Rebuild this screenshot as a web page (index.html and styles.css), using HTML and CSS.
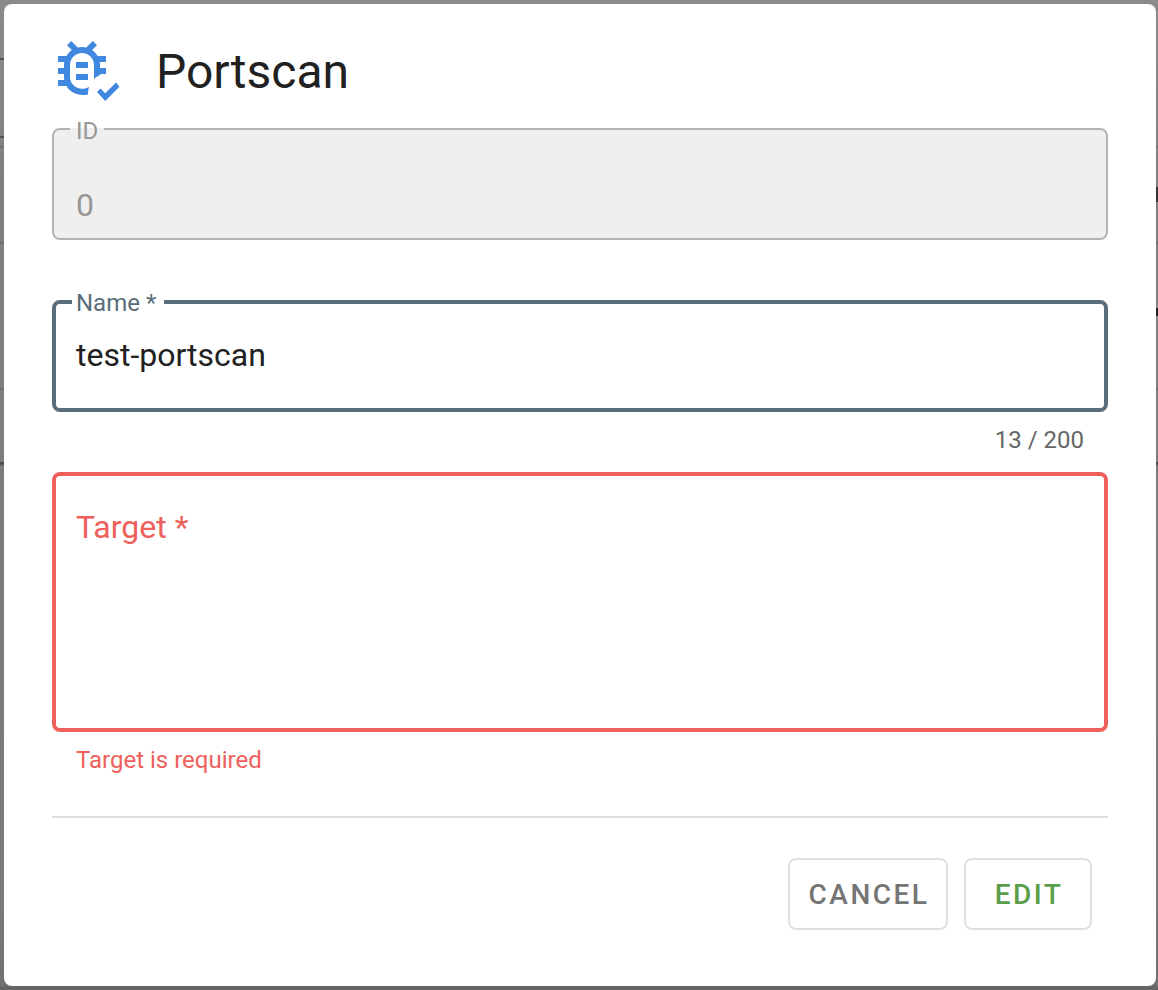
FILE: index.html
```html
<!DOCTYPE html>
<html lang="en">
<head>
<meta charset="utf-8">
<title>Portscan</title>
<link rel="stylesheet" href="styles.css">
</head>
<body>
<main class="backdrop">
  <section class="dialog" role="dialog" aria-labelledby="title">
    <header class="header">
      <svg class="bug" viewBox="0 0 24 24" aria-hidden="true">
        <path fill-rule="evenodd" d="M20 8H17.19C16.74 7.2 16.12 6.5 15.37 6L17 4.41L15.59 3L13.42 5.17C12.96 5.06 12.49 5 12 5S11.05 5.06 10.59 5.17L8.41 3L7 4.41L8.62 6C7.87 6.5 7.26 7.21 6.81 8H4V10H6.09C6.03 10.33 6 10.66 6 11V12H4V14H6V15C6 15.34 6.03 15.67 6.09 16H4V18H6.81C8.1 20.25 10.9 21.5 14 20.8C14 20 14.1 19.2 14.35 18.23C11.8 19.9 8 18.3 8 15V11C8 8.8 9.8 7 12 7S16 8.8 16 11V15.65C16.6 15.1 17.3 14.65 18.1 14.35L18 14H20V12H18V11C18 10.66 17.97 10.33 17.91 10H20V8Z"/>
        <path d="M10 10h4v2h-4zM10 14h4v2h-4zM19.75 23L17 20L18.16 18.84L19.75 20.43L23.34 16.84L24.5 18.25Z"/>
      </svg>
      <h1 class="title" id="title">Portscan</h1>
    </header>
    <form class="form">
      <div class="field field-id">
        <span class="notch">ID</span>
        <span class="value">0</span>
      </div>
      <div class="field field-name">
        <span class="notch">Name *</span>
        <span class="value">test-portscan</span>
      </div>
      <div class="hint counter">13 / 200</div>
      <div class="field field-target">
        <span class="value">Target *</span>
      </div>
      <div class="hint error">Target is required</div>
    </form>
    <footer class="actions">
      <button class="button cancel" type="button">CANCEL</button>
      <button class="button edit" type="button">EDIT</button>
    </footer>
  </section>
</main>
</body>
</html>
```
FILE: styles.css
```css
* { box-sizing: border-box; }
body { margin: 0; font-family: Roboto, "Liberation Sans", sans-serif; }
.backdrop {
  height: 990px;
  padding: 4px 2px 4px 4px;
  overflow: hidden;
  background:
    linear-gradient(#535353, #535353) 0 58px / 4px 2px no-repeat,
    linear-gradient(#535353, #535353) 0 136px / 4px 2px no-repeat,
    linear-gradient(#6f6f6f, #6f6f6f) 0 146px / 100% 2px no-repeat,
    linear-gradient(#6f6f6f, #6f6f6f) 0 242px / 100% 2px no-repeat,
    linear-gradient(#6f6f6f, #6f6f6f) 0 388px / 100% 2px no-repeat,
    linear-gradient(#404040, #707070) 0 462px / 100% 4px no-repeat,
    linear-gradient(#333, #333) 100% 187px / 2px 15px no-repeat,
    linear-gradient(#222, #222) 100% 308px / 2px 8px no-repeat,
    linear-gradient(#666, #666) 0 986px / 100% 4px no-repeat,
    linear-gradient(#8b8b8b, #7f7e7d 200px, #7b7a79 900px, #707070);
}
.dialog {
  display: flex;
  flex-direction: column;
  height: 982px;
  padding: 28px 48px 56px;
  border-radius: 8px;
  background: #fff;
}
.header { display: flex; align-items: center; height: 80px; }
.bug {
  flex: none;
  width: 72px;
  height: 72px;
  margin: -8px 0 0 -6px;
  overflow: visible;
  fill: #3f87df;
}
.title {
  margin: 0 0 0 38px;
  font-size: 48px;
  font-weight: 400;
  line-height: 80px;
  color: #212121;
}
.form { display: flex; flex-direction: column; margin-top: 16px; }
.field {
  position: relative;
  height: 112px;
  border: 4px solid;
  border-radius: 8px;
  padding: 0 20px;
}
.value { display: block; font-size: 32px; line-height: 40px; }
.notch {
  position: absolute;
  z-index: 0;
  left: 16px;
  top: -15px;
  padding: 0 8px 0 4px;
  font-size: 24px;
  line-height: 28px;
}
.notch::before {
  content: "";
  position: absolute;
  z-index: -1;
  inset: 11px 0 auto;
  height: 4px;
  background: #fff;
}
.field-id { border: 2px solid #b3b3b3; padding: 55px 22px 0; background: #efefef; color: #979797; }
.field-id .notch { left: 16px; top: -13px; padding: 0 6px; }
.field-id .notch::before { top: 11px; height: 2px; background: #efefef; }
.field-name { margin-top: 60px; border-color: #586e7a; padding-top: 31px; color: #586e7a; }
.field-name .value { color: #212121; }
.field-target { height: 260px; margin-top: 16px; border-color: #ee605b; padding-top: 31px; color: #ee605b; }
.hint { padding: 0 24px; font-size: 24px; line-height: 28px; }
.counter { margin-top: 14px; margin-bottom: 2px; text-align: right; color: #666; }
.error { margin-top: 14px; color: #ee605b; }
.actions {
  display: flex;
  justify-content: flex-end;
  gap: 16px;
  margin-top: 42px;
  padding: 40px 16px 0 0;
  border-top: 2px solid #e0e0e0;
}
.button {
  height: 72px;
  padding: 2px 0 0 2px;
  border: 2px solid #e0e0e0;
  border-radius: 8px;
  background: #fff;
  font: 500 28px/40px Roboto, "Liberation Sans", sans-serif;
  letter-spacing: 2.5px;
}
.cancel { width: 160px; color: #757575; }
.edit { width: 128px; color: #5a9e4b; }
```
